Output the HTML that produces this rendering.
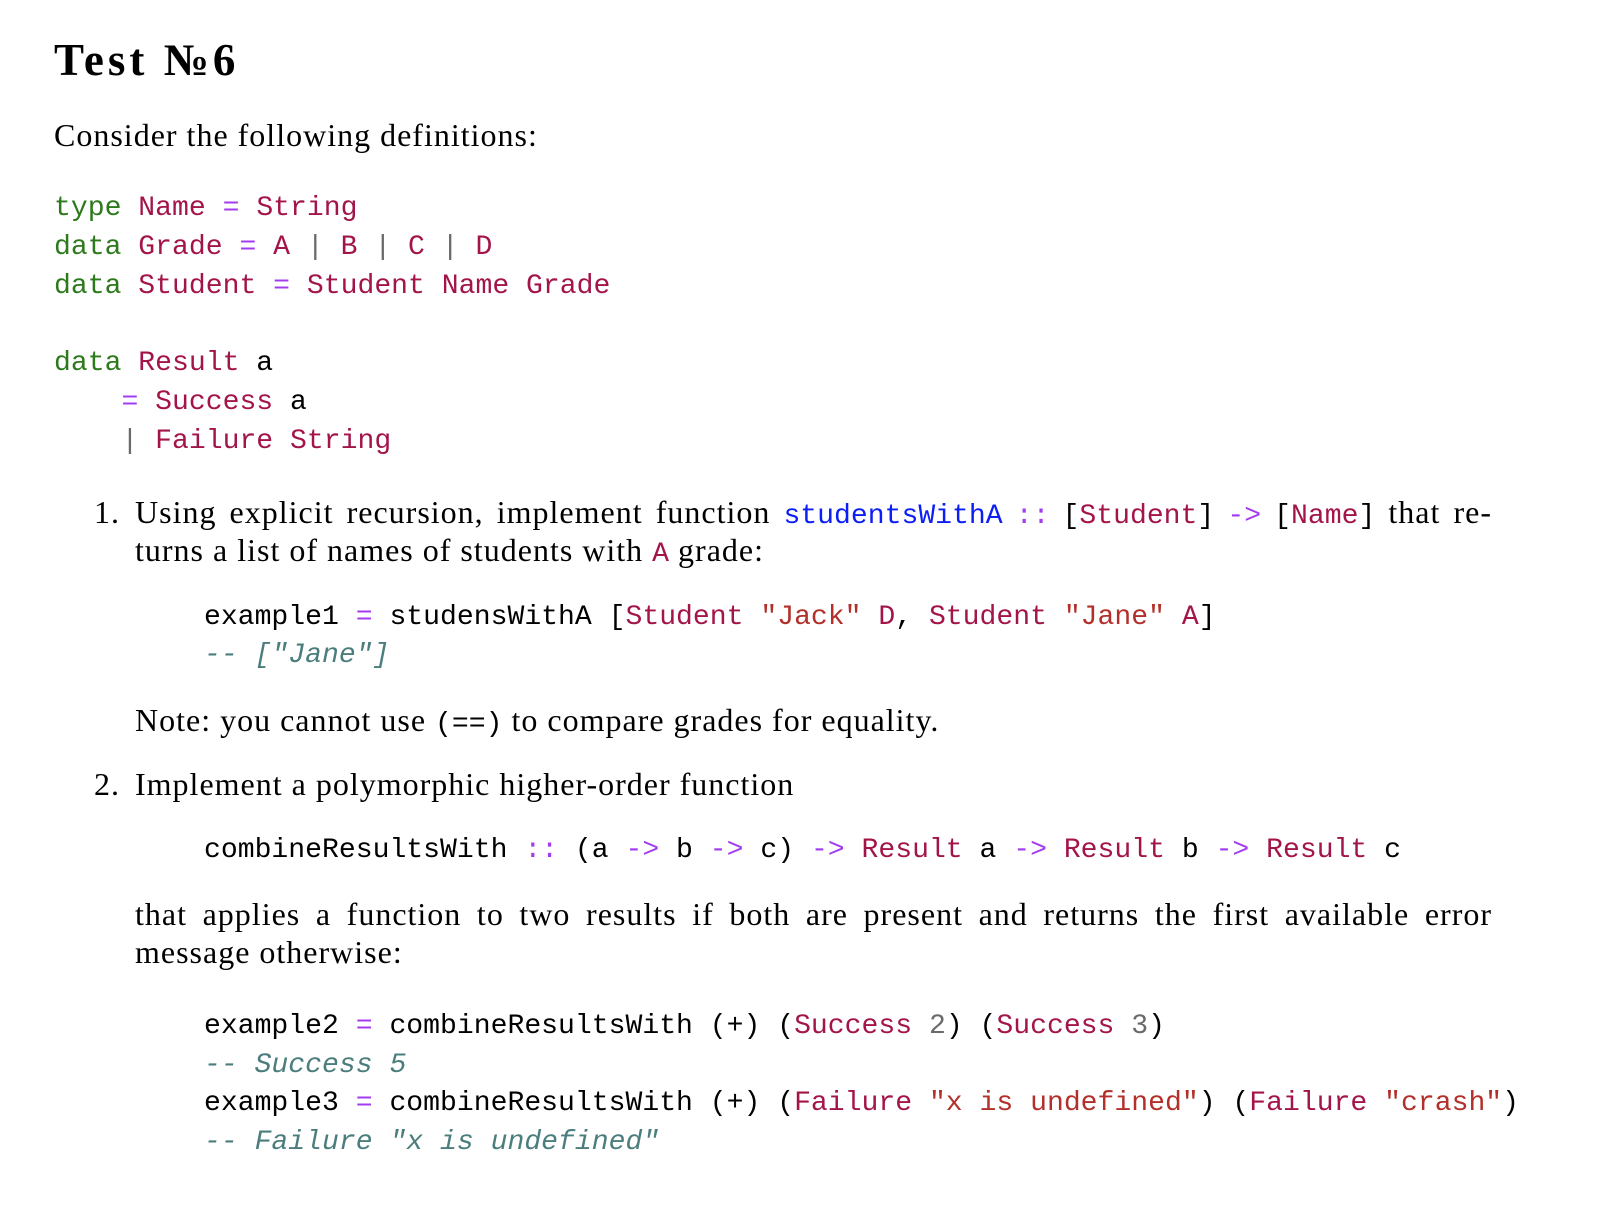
<!DOCTYPE html>
<html><head><meta charset="utf-8"><style>
body{margin:0;background:#fff;width:1624px;height:1212px;position:relative;overflow:hidden;color:#000}
.l{position:absolute;height:40px;line-height:40px;white-space:pre;font-family:"Liberation Serif",serif;font-size:32px;letter-spacing:1px}
.c{font-family:"Liberation Mono",monospace;font-size:28.1px;letter-spacing:0}
.c span,.l span.m{font-family:"Liberation Mono",monospace;letter-spacing:0}
.m{font-size:28.1px}
.k{color:#2d7a1c}.t{color:#a3154a}.o{color:#a33cf0}.f{color:#0a1ef5}.s{color:#b3302a}.n{color:#6a6a6a}
.cm{color:#4b7d7d;font-style:italic}
.j{text-align:justify;text-align-last:justify;width:1357px}
</style></head><body>
<div class="l" style="top:38px;left:54px;font-size:45px;font-weight:bold;letter-spacing:4px;height:44px;line-height:44px">Test №6</div>
<div class="l" style="top:115px;left:54px">Consider the following definitions:</div>

<div class="l c" style="top:189px;left:54px"><span class="k">type</span> <span class="t">Name</span> <span class="o">=</span> <span class="t">String</span></div>
<div class="l c" style="top:228px;left:54px"><span class="k">data</span> <span class="t">Grade</span> <span class="o">=</span> <span class="t">A</span> <span class="n">|</span> <span class="t">B</span> <span class="n">|</span> <span class="t">C</span> <span class="n">|</span> <span class="t">D</span></div>
<div class="l c" style="top:267px;left:54px"><span class="k">data</span> <span class="t">Student</span> <span class="o">=</span> <span class="t">Student Name Grade</span></div>
<div class="l c" style="top:344px;left:54px"><span class="k">data</span> <span class="t">Result</span> a</div>
<div class="l c" style="top:383px;left:54px">    <span class="o">=</span> <span class="t">Success</span> a</div>
<div class="l c" style="top:422px;left:54px">    <span class="n">|</span> <span class="t">Failure String</span></div>

<div class="l" style="top:492px;left:94px">1.</div>
<div class="l j" style="top:492px;left:135px">Using explicit recursion, implement function <span class="m f">studentsWithA</span> <span class="m o">::</span> <span class="m">[<span class="t">Student</span>]</span> <span class="m o">-&gt;</span> <span class="m">[<span class="t">Name</span>]</span> that re-</div>
<div class="l" style="top:530px;left:135px">turns a list of names of students with <span class="m t">A</span> grade:</div>

<div class="l c" style="top:598px;left:204px">example1 <span class="o">=</span> studensWithA [<span class="t">Student</span> <span class="s">"Jack"</span> <span class="t">D</span>, <span class="t">Student</span> <span class="s">"Jane"</span> <span class="t">A</span>]</div>
<div class="l c cm" style="top:636px;left:204px">-- ["Jane"]</div>

<div class="l" style="top:700px;left:135px">Note: you cannot use <span class="m">(==)</span> to compare grades for equality.</div>

<div class="l" style="top:764px;left:94px">2.</div>
<div class="l" style="top:764px;left:135px">Implement a polymorphic higher-order function</div>

<div class="l c" style="top:831px;left:204px">combineResultsWith <span class="o">::</span> (a <span class="o">-&gt;</span> b <span class="o">-&gt;</span> c) <span class="o">-&gt;</span> <span class="t">Result</span> a <span class="o">-&gt;</span> <span class="t">Result</span> b <span class="o">-&gt;</span> <span class="t">Result</span> c</div>

<div class="l j" style="top:894px;left:135px">that applies a function to two results if both are present and returns the first available error</div>
<div class="l" style="top:932px;left:135px">message otherwise:</div>

<div class="l c" style="top:1007px;left:204px">example2 <span class="o">=</span> combineResultsWith (+) (<span class="t">Success</span> <span class="n">2</span>) (<span class="t">Success</span> <span class="n">3</span>)</div>
<div class="l c cm" style="top:1046px;left:204px">-- Success 5</div>
<div class="l c" style="top:1084px;left:204px">example3 <span class="o">=</span> combineResultsWith (+) (<span class="t">Failure</span> <span class="s">"x is undefined"</span>) (<span class="t">Failure</span> <span class="s">"crash"</span>)</div>
<div class="l c cm" style="top:1123px;left:204px">-- Failure "x is undefined"</div>
</body></html>
